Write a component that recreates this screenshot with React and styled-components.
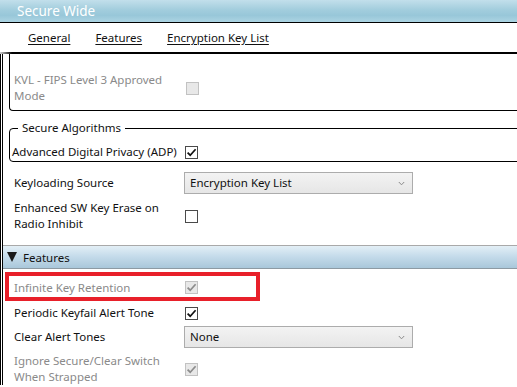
import React from 'react';
import styled, {createGlobalStyle} from 'styled-components';

const GlobalStyle = createGlobalStyle`
  html, body {
    margin: 0;
    padding: 0;
    background: #fff;
  }
  body {
    font-family: "Noto Sans", "Open Sans", sans-serif;
    font-size: 11.5px;
    color: #111;
  }
`;

const Window = styled.div`
  width: 517px;
  height: 387px;
  overflow: hidden;
  background: #fff;
`;

const TitleBar = styled.div`
  height: 22px;
  display: flex;
  align-items: center;
  padding-left: 17px;
  background: linear-gradient(#c2dfeb 0%, #a2cddd 45%, #98c7d9 70%, #acd4e3 100%);
  border-bottom: 1px solid #000;
  color: #fff;
  font-size: 13.5px;
`;

const TabStrip = styled.div`
  height: 29px;
  display: flex;
  align-items: center;
  gap: 25px;
  padding-left: 28px;
`;

const TabLink = styled.span`
  text-decoration: underline;
  text-underline-offset: 2px;
  color: #111;
`;

const Rule = styled.div`
  height: 2px;
  background: linear-gradient(to right, #d0d0d0 0px, #000 12px);
`;

const Body = styled.div`
  border-left: 3px double #000;
`;

const Section = styled.div`
  padding: ${({$pad}) => $pad || '0'};
`;

const ClippedGroup = styled.div`
  margin: 0 -60px 0 6px;
  padding: 18px 0 6px 2px;
  border-left: 1px solid #000;
  border-bottom: 1px solid #000;
  border-bottom-left-radius: 4px;
`;

const GroupBox = styled.fieldset`
  box-sizing: border-box;
  width: 600px;
  margin: 9px 0 0 6px;
  padding: 8px 0 1px 2px;
  min-width: 0;
  border: 1px solid #000;
  border-radius: 4px;
`;

const Legend = styled.legend`
  margin-left: 6px;
  padding: 0 4px;
  line-height: 16px;
`;

const Row = styled.div`
  display: grid;
  grid-template-columns: ${({$label}) => $label}px auto;
  align-items: center;
  padding-left: ${({$indent}) => $indent}px;
  margin-top: ${({$top}) => $top || 0}px;
  line-height: 16px;
  color: ${({$dim}) => ($dim ? '#8a8a8a' : '#111')};
`;

const Box = styled.span`
  width: 13px;
  height: 13px;
  box-sizing: border-box;
  display: flex;
  align-items: center;
  justify-content: center;
  border: 1px solid ${({$dim}) => ($dim ? '#c2c2c2' : '#4a4a4a')};
  background: ${({$dim}) => ($dim ? '#e8e8e8' : '#fff')};
`;

const Select = styled.div`
  width: 229px;
  height: 22px;
  box-sizing: border-box;
  margin-left: -1px;
  display: flex;
  align-items: center;
  justify-content: space-between;
  padding: 0 7px 0 5px;
  border: 1px solid #acacac;
  background: linear-gradient(#f3f3f3, #e6e6e6);
  color: #111;
`;

const SectionHeader = styled.div`
  height: 22px;
  display: flex;
  align-items: center;
  gap: 6px;
  padding-left: 4px;
  border-top: 1px solid #a9a9a9;
  border-bottom: 1px solid #8d9aa3;
  background: linear-gradient(#e3eff6 0%, #c6dceb 45%, #a9c7da 100%);
  color: #111;
`;

const Arrow = styled.span`
  width: 0;
  height: 0;
  border-left: 5px solid transparent;
  border-right: 5px solid transparent;
  border-top: 10px solid #1a1a1a;
`;

const Highlight = styled.div`
  position: relative;
  margin-top: 3px;
  &::after {
    content: '';
    position: absolute;
    left: 2px;
    top: 0;
    width: 255px;
    height: 29px;
    box-sizing: border-box;
    border: 4px solid #e8202a;
    pointer-events: none;
  }
`;

const HighlightRow = styled(Row)`
  height: 29px;
  box-sizing: border-box;
  padding-top: 2px;
`;

const Check = ({color}) => (
  <svg width="11" height="11" viewBox="0 0 11 11">
    <path d="M1.6 5.6 L4.2 8.2 L9.6 2.2" fill="none" stroke={color} strokeWidth="1.7" />
  </svg>
);

const CheckBox = ({checked, dim}) => (
  <Box $dim={dim}>{checked && <Check color={dim ? '#8c8c8c' : '#111'} />}</Box>
);

const Chevron = () => (
  <svg width="7" height="5" viewBox="0 0 7 5">
    <path d="M0.8 1 L3.5 3.8 L6.2 1" fill="none" stroke="#8a8a8a" strokeWidth="1" />
  </svg>
);

const Dropdown = ({value}) => (
  <Select>
    <span>{value}</span>
    <Chevron />
  </Select>
);

const App = () => {
  return (
    <Window>
      <GlobalStyle />
      <TitleBar>Secure Wide</TitleBar>
      <TabStrip>
        <TabLink>General</TabLink>
        <TabLink>Features</TabLink>
        <TabLink>Encryption Key List</TabLink>
      </TabStrip>
      <Rule />
      <Body>
        <Section $pad="0 0 13px 0">
          <ClippedGroup>
            <Row $indent={2} $label={172} $dim>
              <span>KVL - FIPS Level 3 Approved<br />Mode</span>
              <CheckBox dim />
            </Row>
          </ClippedGroup>
          <GroupBox>
            <Legend>Secure Algorithms</Legend>
            <Row $indent={0} $label={173}>
              <span>Advanced Digital Privacy (ADP)</span>
              <CheckBox checked />
            </Row>
          </GroupBox>
          <Row $indent={11} $label={171} $top={10}>
            <span>Keyloading Source</span>
            <Dropdown value="Encryption Key List" />
          </Row>
          <Row $indent={11} $label={171} $top={6}>
            <span>Enhanced SW Key Erase on<br />Radio Inhibit</span>
            <CheckBox />
          </Row>
        </Section>
        <SectionHeader>
          <Arrow />
          <span>Features</span>
        </SectionHeader>
        <Section>
          <Highlight>
            <HighlightRow $indent={11} $label={171} $dim>
              <span>Infinite Key Retention</span>
              <CheckBox checked dim />
            </HighlightRow>
          </Highlight>
          <Row $indent={11} $label={171} $top={4}>
            <span>Periodic Keyfail Alert Tone</span>
            <CheckBox checked />
          </Row>
          <Row $indent={11} $label={171} $top={5}>
            <span>Clear Alert Tones</span>
            <Dropdown value="None" />
          </Row>
          <Row $indent={11} $label={171} $top={5} $dim>
            <span>Ignore Secure/Clear Switch<br />When Strapped</span>
            <CheckBox checked dim />
          </Row>
        </Section>
      </Body>
    </Window>
  );
};

export default App;
